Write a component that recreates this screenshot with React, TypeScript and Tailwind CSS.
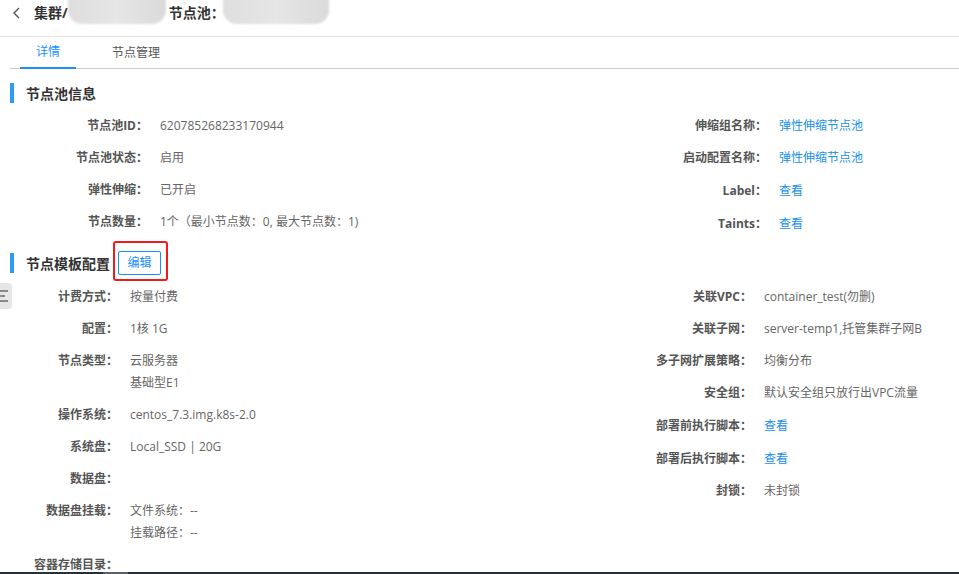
import { ReactNode } from 'react';

type Row = { label: string; value?: ReactNode; link?: boolean; tall?: boolean };

const poolLeft: Row[] = [
  { label: '节点池ID', value: '620785268233170944' },
  { label: '节点池状态', value: '启用' },
  { label: '弹性伸缩', value: '已开启' },
  { label: '节点数量', value: '1个（最小节点数：0, 最大节点数：1)' },
];

const poolRight: Row[] = [
  { label: '伸缩组名称', value: '弹性伸缩节点池', link: true },
  { label: '启动配置名称', value: '弹性伸缩节点池', link: true },
  { label: 'Label', value: '查看', link: true, tall: true },
  { label: 'Taints', value: '查看', link: true, tall: true },
];

const tplLeft: Row[] = [
  { label: '计费方式', value: '按量付费' },
  { label: '配置', value: '1核 1G' },
  { label: '节点类型', value: ['云服务器', '基础型E1'] },
  { label: '操作系统', value: 'centos_7.3.img.k8s-2.0' },
  { label: '系统盘', value: 'Local_SSD | 20G' },
  { label: '数据盘' },
  { label: '数据盘挂载', value: ['文件系统：--', '挂载路径：--'] },
  { label: '容器存储目录' },
];

const tplRight: Row[] = [
  { label: '关联VPC', value: 'container_test(勿删)' },
  { label: '关联子网', value: 'server-temp1,托管集群子网B' },
  { label: '多子网扩展策略', value: '均衡分布' },
  { label: '安全组', value: '默认安全组只放行出VPC流量' },
  { label: '部署前执行脚本', value: '查看', link: true, tall: true },
  { label: '部署后执行脚本', value: '查看', link: true, tall: true },
  { label: '封锁', value: '未封锁' },
];

function Field({ row, labelW }: { row: Row; labelW: string }) {
  const lines = Array.isArray(row.value) ? row.value : [row.value];
  return (
    <div
      className={`flex items-start gap-[12px] leading-[22px] text-[12px] ${
        row.tall ? 'pt-[6px] pb-[5px]' : 'py-[5px]'
      }`}
    >
      <div className={`${labelW} shrink-0 text-right font-bold text-[#555]`}>{row.label}：</div>
      <div className={row.link ? 'text-[#1890e8]' : 'text-[#666]'}>
        {lines.map((l, i) => (
          <div key={i} className="h-[22px] whitespace-nowrap">
            {l}
          </div>
        ))}
      </div>
    </div>
  );
}

function SectionTitle({ children }: { children: ReactNode }) {
  return (
    <div className="flex items-center h-[24px]">
      <span className="w-[4px] h-[20px] bg-[#2d9cf5]" />
      <span className="ml-[12px] text-[14px] font-bold text-[#333]">{children}</span>
    </div>
  );
}

// masked-out names in the breadcrumb
function Blur({ w }: { w: string }) {
  return (
    <span
      className={`${w} h-[28px] -mt-[8px] inline-block rounded-b-[14px] bg-gradient-to-r from-[#dedede] via-[#e6e6e6] to-[#dadada] blur-[1px]`}
    />
  );
}

export default function App() {
  return (
    <div
      className="relative w-[959px] h-[574px] overflow-hidden bg-white"
      style={{ fontFamily: '"Open Sans", "Noto Sans CJK SC", sans-serif' }}
    >
      {/* breadcrumb */}
      <header className="h-[37px] border-b border-[#e2e2e2] flex items-start pt-[4px] pl-[10px] text-[14px] font-bold text-[#333] leading-[18px]">
        <svg width="14" height="18" viewBox="0 0 14 18" className="mr-[10px]">
          <path d="M9 4 L4 9 L9 14" fill="none" stroke="#555" strokeWidth="1.4" />
        </svg>
        <span>集群/</span>
        <Blur w="w-[98px]" />
        <span className="ml-[3px]">节点池：</span>
        <span className="-ml-[2px]">
          <Blur w="w-[106px]" />
        </span>
      </header>

      {/* tabs */}
      <nav className="ml-[10px] pl-[10px] h-[32px] flex gap-[20px] border-b border-[#cbcbcb] text-[12px]">
        <div className="px-[16px] flex items-center border-b-2 border-[#1890ff] text-[#1890ff] -mb-px">详情</div>
        <div className="px-[16px] flex items-center text-[#555]">节点管理</div>
      </nav>

      <div className="pl-[10px]">
        <div className="mt-[12px]">
          <SectionTitle>节点池信息</SectionTitle>
        </div>
        <div className="mt-[5px] grid grid-cols-[620px_1fr]">
          <div>
            {poolLeft.map((r) => (
              <Field key={r.label} row={r} labelW="w-[138px]" />
            ))}
          </div>
          <div>
            {poolRight.map((r) => (
              <Field key={r.label} row={r} labelW="w-[137px]" />
            ))}
          </div>
        </div>

        <div className="mt-[11px] flex items-center">
          <SectionTitle>节点模板配置</SectionTitle>
          <button className="relative ml-[8px] h-[24px] w-[43px] border border-[#1890ff] rounded-[2px] text-[12px] text-[#1890ff]">
            编辑
            <span className="absolute -left-[6px] -right-[8px] -top-[11px] -bottom-[7px] border-2 border-[#ee1c1c] rounded-[3px]" />
          </button>
        </div>
        <div className="mt-[6px] grid grid-cols-[620px_1fr]">
          <div>
            {tplLeft.map((r) => (
              <Field key={r.label} row={r} labelW="w-[108px]" />
            ))}
          </div>
          <div>
            {tplRight.map((r) => (
              <Field key={r.label} row={r} labelW="w-[122px]" />
            ))}
          </div>
        </div>
      </div>

      {/* floating side handle */}
      <div className="absolute left-0 top-[283px] w-[12px] h-[26px] bg-[#e6e6e6] rounded-r-[4px] flex items-center">
        <svg width="12" height="26" viewBox="0 0 12 26">
          <path d="M0 8 H8 M0 13 H5 M0 18 H8" stroke="#8a8a8a" strokeWidth="2" />
        </svg>
      </div>

      {/* window edge */}
      <div className="absolute left-0 right-0 bottom-0 h-[2px] bg-[#26323a]">
        <div className="ml-[103px] w-[25px] h-full bg-[#5a6166]" />
      </div>
    </div>
  );
}
